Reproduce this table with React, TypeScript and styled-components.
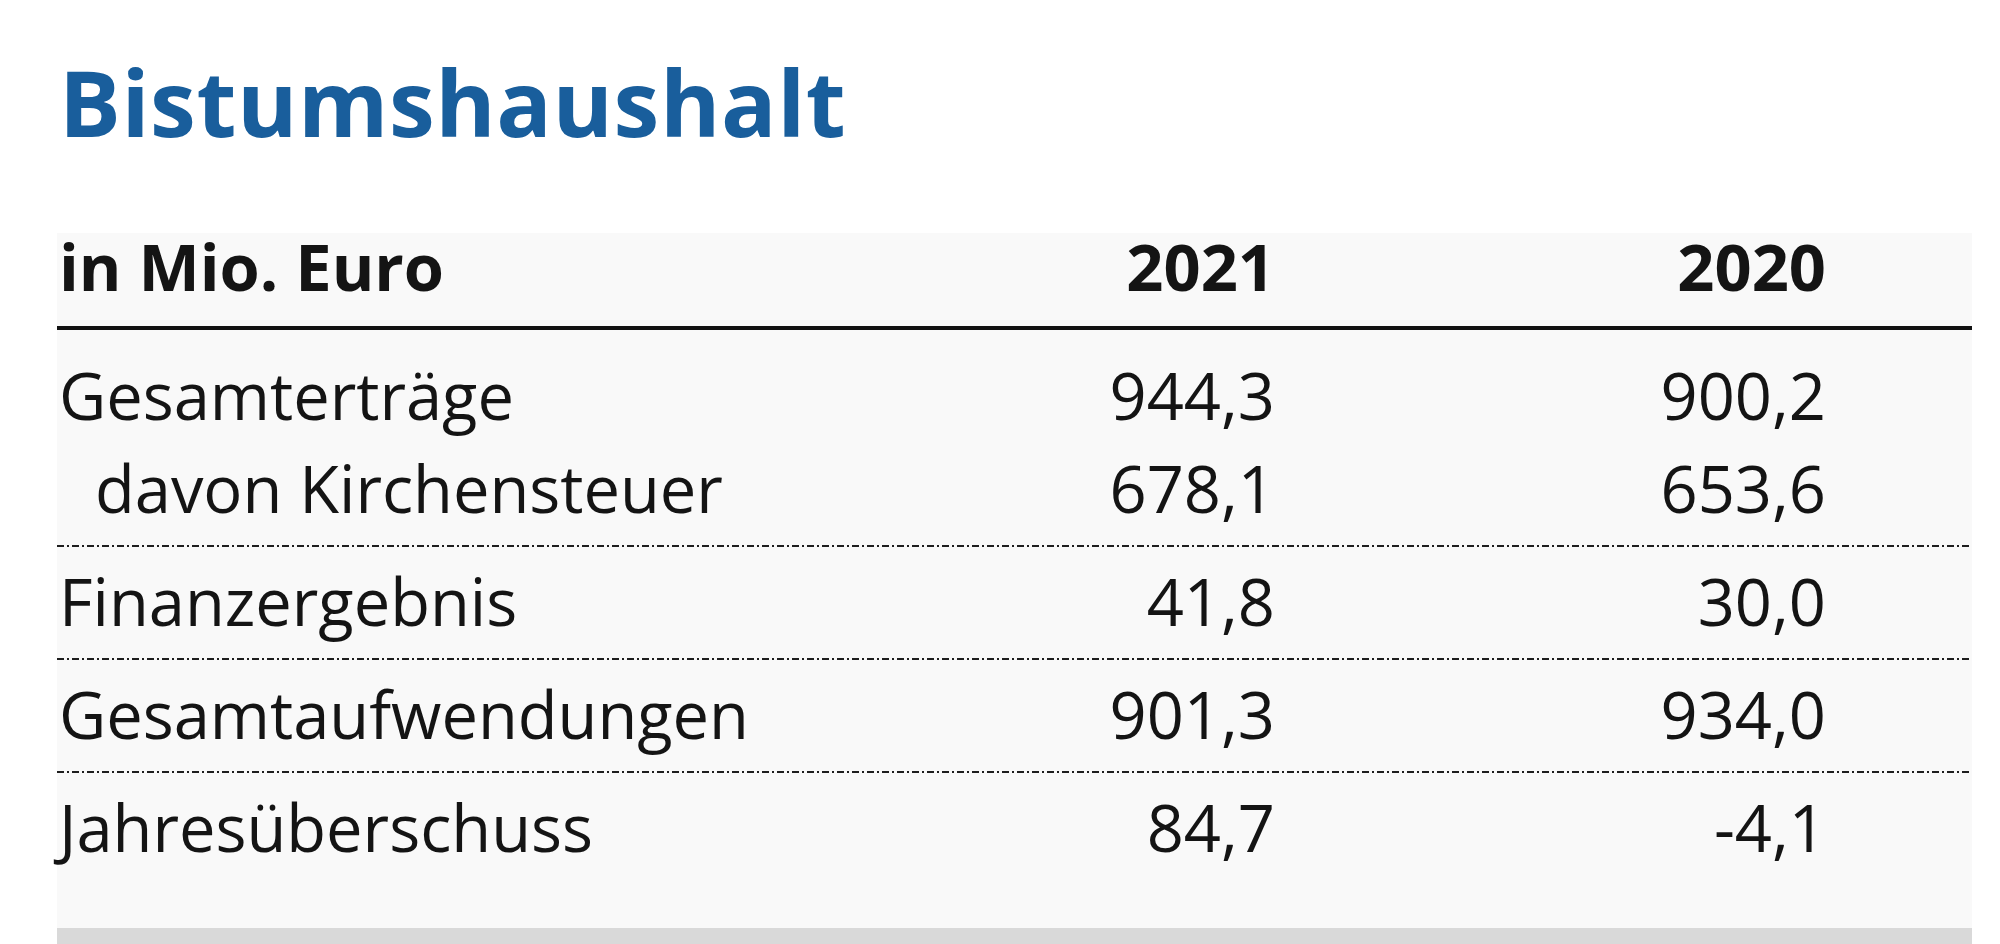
import styled, { createGlobalStyle } from "styled-components";

interface IRow {
  label: string;
  y2021: string;
  y2020: string;
  indent?: boolean;
}

const groups: IRow[][] = [
  [
    { label: "Gesamterträge", y2021: "944,3", y2020: "900,2" },
    { label: "davon Kirchensteuer", y2021: "678,1", y2020: "653,6", indent: true },
  ],
  [{ label: "Finanzergebnis", y2021: "41,8", y2020: "30,0" }],
  [{ label: "Gesamtaufwendungen", y2021: "901,3", y2020: "934,0" }],
  [{ label: "Jahresüberschuss", y2021: "84,7", y2020: "-4,1" }],
];

const App = () => {
  return (
    <>
      <GlobalStyle />
      <Page>
        <Title>Bistumshaushalt</Title>
        <Panel>
          <HeaderRow>
            <span>in Mio. Euro</span>
            <Num>2021</Num>
            <Num>2020</Num>
          </HeaderRow>
          {groups.map((group, i) => (
            <Group
              key={i}
              $first={i === 0}
              $last={i === groups.length - 1}
            >
              {group.map((row) => (
                <Row key={row.label}>
                  <Label $indent={row.indent}>{row.label}</Label>
                  <Num>{row.y2021}</Num>
                  <Num>{row.y2020}</Num>
                </Row>
              ))}
            </Group>
          ))}
          <BottomBar />
        </Panel>
      </Page>
    </>
  );
};

export default App;

const GlobalStyle = createGlobalStyle`
  body {
    margin: 0;
    background: #fff;
    font-family: "Open Sans", "Noto Sans", sans-serif;
    color: #141414;
  }
`;
const Page = styled.div`
  padding: 56px 0 0 57px;
  width: 1915px;
`;
const Title = styled.h1`
  margin: 0 0 85px 2px;
  font-size: 92px;
  line-height: 92px;
  font-weight: 700;
  color: #195e9c;
  letter-spacing: 0.6px;
`;
const Panel = styled.div`
  background: #f9f9f9;
`;
const HeaderRow = styled.div`
  display: grid;
  grid-template-columns: 1fr 230px 551px;
  padding: 0 146px 27px 2px;
  font-size: 65px;
  line-height: 66px;
  font-weight: 700;
  border-bottom: 4px solid #111;
`;
const Group = styled.div<{ $first?: boolean; $last?: boolean }>`
  padding: ${({ $first }) => ($first ? "19px" : "8px")} 146px
    ${({ $last }) => ($last ? "54px" : "12px")} 2px;
  ${({ $last }) =>
    !$last &&
    `
    background-image: repeating-linear-gradient(
      to right,
      #1e1e1e 0 7px,
      transparent 7px 10px,
      #1e1e1e 10px 12px,
      transparent 12px 15px
    );
    background-size: 100% 2px;
    background-position: left bottom;
    background-repeat: no-repeat;
  `}
`;
const Row = styled.div`
  display: grid;
  grid-template-columns: 1fr 230px 551px;
  font-size: 65px;
  line-height: 93px;
  font-weight: 400;
`;
const Label = styled.span<{ $indent?: boolean }>`
  padding-left: ${({ $indent }) => ($indent ? "36px" : "0")};
  white-space: nowrap;
`;
const Num = styled.span`
  text-align: right;
`;
const BottomBar = styled.div`
  height: 16px;
  background: #d9d9d9;
`;
